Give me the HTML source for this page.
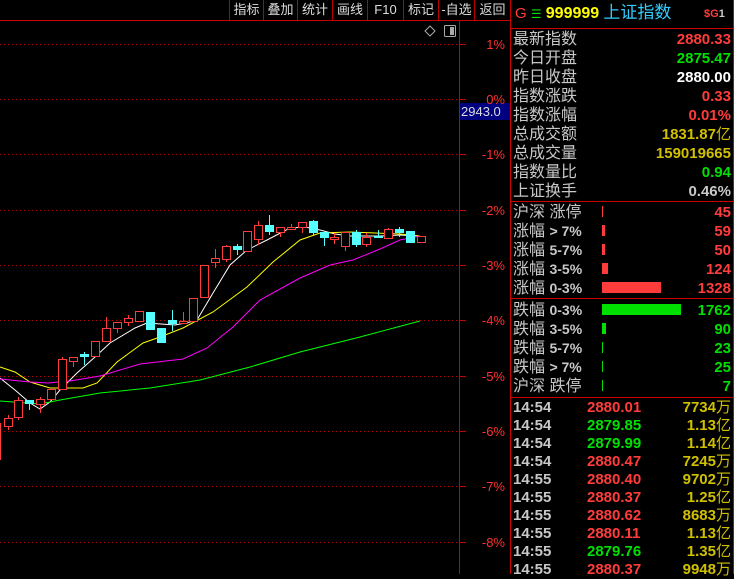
<!DOCTYPE html><html><head><meta charset="utf-8"><style>
*{margin:0;padding:0;box-sizing:border-box}
body{width:734px;height:574px;background:#000;overflow:hidden;position:relative;font-family:"Liberation Sans","WenQuanYi Zen Hei","Noto Sans CJK SC",sans-serif;font-size:14px;}
.a{position:absolute;white-space:nowrap;line-height:19px}
.tb{position:absolute;top:0;height:20px;line-height:20px;color:#ddd;font-size:13px;text-align:center;border-right:1px solid #b00;}
.r{position:absolute;left:513px;width:218px;height:19px;line-height:19px}
.r .l{position:absolute;left:0;color:#c8c8c8;font-size:16px}
.r .l b{font-size:14px}
.r .v{position:absolute;right:0;font-weight:bold;font-size:15px}
.w{color:#c8c8c8}.red{color:#ff3c3c}.grn{color:#00e000}.yel{color:#d0c000}
.pct{position:absolute;left:463px;width:42px;text-align:right;color:#ff3030;font-size:13px;line-height:14px}
.t{font-size:15px}
</style></head><body>
<svg width="734" height="574" style="position:absolute;left:0;top:0">
<g stroke="#b00" stroke-width="1" stroke-dasharray="1,3">
<line x1="0" y1="44.5" x2="459" y2="44.5"/><line x1="0" y1="99.5" x2="459" y2="99.5"/><line x1="0" y1="154.5" x2="459" y2="154.5"/><line x1="0" y1="210.5" x2="459" y2="210.5"/><line x1="0" y1="265.5" x2="459" y2="265.5"/><line x1="0" y1="320.5" x2="459" y2="320.5"/><line x1="0" y1="376.5" x2="459" y2="376.5"/><line x1="0" y1="431.5" x2="459" y2="431.5"/><line x1="0" y1="486.5" x2="459" y2="486.5"/><line x1="0" y1="542.5" x2="459" y2="542.5"/>
</g>
<g stroke="#c00" stroke-width="1">
<line x1="459.5" y1="20" x2="459.5" y2="574"/><line x1="510.5" y1="0" x2="510.5" y2="574"/>
<line x1="0" y1="20.5" x2="510" y2="20.5"/>
<line x1="460" y1="44.5" x2="466" y2="44.5"/><line x1="460" y1="99.5" x2="466" y2="99.5"/><line x1="460" y1="154.5" x2="466" y2="154.5"/><line x1="460" y1="210.5" x2="466" y2="210.5"/><line x1="460" y1="265.5" x2="466" y2="265.5"/><line x1="460" y1="320.5" x2="466" y2="320.5"/><line x1="460" y1="376.5" x2="466" y2="376.5"/><line x1="460" y1="431.5" x2="466" y2="431.5"/><line x1="460" y1="486.5" x2="466" y2="486.5"/><line x1="460" y1="542.5" x2="466" y2="542.5"/>
<line x1="511" y1="28.5" x2="734" y2="28.5"/><line x1="511" y1="201.5" x2="734" y2="201.5"/><line x1="511" y1="298.5" x2="734" y2="298.5"/><line x1="511" y1="397.5" x2="734" y2="397.5"/>
<line x1="733.5" y1="0" x2="733.5" y2="574"/>
</g>
<path d="M430 26 L435 31 L430 36 L425 31 Z" fill="none" stroke="#aaa"/>
<rect x="444.5" y="25.5" width="11" height="11" rx="1" fill="none" stroke="#aaa"/><rect x="450" y="27" width="4" height="8" fill="#aaa"/>
<rect x="460" y="103" width="50" height="17" fill="#000080"/>
<polyline fill="none" stroke="#fff" points="0,378 15,390 30,403 40,409 50,402 60,390 77,373 95,357 110,343 135,328 147,323 175,325 190,322 197,320 213,293 230,265 247,250 267,240 290,228 305,227 320,230 335,234 350,236 380,236 400,235 420,236"/>
<polyline fill="none" stroke="#ff0" points="0,367 15,372 30,382 50,388 83,388 97,383 117,362 143,343 160,337 183,328 213,312 247,287 273,262 300,240 320,233 350,232 400,234 420,236"/>
<polyline fill="none" stroke="#f0f" points="0,379 30,382 48,383 70,381 100,376 140,364 183,359 207,348 233,327 260,300 300,278 330,265 353,260 380,249 400,240 420,236"/>
<polyline fill="none" stroke="#0f0" points="0,401 40,404 60,400 100,393 150,388 200,380 250,367 300,352 360,337 420,321"/>
<g stroke="#ff3c3c" fill="#000">
<line x1="0.5" y1="423" x2="0.5" y2="460"/>
<line x1="8.5" y1="415" x2="8.5" y2="430"/><rect x="4.5" y="418.5" width="8" height="8"/>
<line x1="18.5" y1="397" x2="18.5" y2="420"/><rect x="14.5" y="400.5" width="8" height="17"/>
<line x1="40.5" y1="397" x2="40.5" y2="413"/><rect x="36.5" y="399.5" width="8" height="5"/>
<rect x="47.5" y="389.5" width="8" height="10"/>
<line x1="62.5" y1="357" x2="62.5" y2="389"/><rect x="58.5" y="359.5" width="8" height="30"/>
<line x1="73.5" y1="357" x2="73.5" y2="367"/><rect x="69.5" y="357.5" width="8" height="4"/>
<rect x="91.5" y="341.5" width="8" height="15"/>
<line x1="106.5" y1="317" x2="106.5" y2="341"/><rect x="102.5" y="328.5" width="8" height="13"/>
<line x1="117.5" y1="322" x2="117.5" y2="333"/><rect x="113.5" y="322.5" width="8" height="6"/>
<line x1="128.5" y1="315" x2="128.5" y2="326"/><rect x="124.5" y="318.5" width="8" height="4"/>
<rect x="135.5" y="311.5" width="8" height="10"/>
<line x1="183.5" y1="312" x2="183.5" y2="323"/><rect x="179.5" y="321.5" width="8" height="2"/>
<rect x="189.5" y="298.5" width="8" height="23"/>
<rect x="200.5" y="265.5" width="8" height="32"/>
<line x1="215.5" y1="249" x2="215.5" y2="268"/><rect x="211.5" y="258.5" width="8" height="4"/>
<line x1="226.5" y1="245" x2="226.5" y2="262"/><rect x="222.5" y="246.5" width="8" height="13"/>
<rect x="243.5" y="231.5" width="8" height="20"/>
<line x1="258.5" y1="221" x2="258.5" y2="245"/><rect x="254.5" y="225.5" width="8" height="14"/>
<line x1="280.5" y1="227" x2="280.5" y2="237"/><rect x="276.5" y="227.5" width="8" height="5"/>
<line x1="291.5" y1="224" x2="291.5" y2="230"/><rect x="287.5" y="227.5" width="8" height="2"/>
<line x1="302.5" y1="222" x2="302.5" y2="233"/><rect x="298.5" y="222.5" width="8" height="5"/>
<line x1="334.5" y1="233" x2="334.5" y2="244"/><rect x="330.5" y="237.5" width="8" height="2"/>
<line x1="345.5" y1="232" x2="345.5" y2="251"/><rect x="341.5" y="232.5" width="8" height="14"/>
<line x1="366.5" y1="233" x2="366.5" y2="247"/><rect x="362.5" y="237.5" width="8" height="7"/>
<line x1="388.5" y1="228" x2="388.5" y2="238"/><rect x="384.5" y="229.5" width="8" height="9"/>
<rect x="417.5" y="236.5" width="8" height="6"/>
</g>
<g stroke="#55ffff" fill="#55ffff">
<line x1="29.5" y1="400" x2="29.5" y2="410"/><rect x="25.5" y="400.5" width="8" height="3"/>
<line x1="84.5" y1="352" x2="84.5" y2="365"/><rect x="80.5" y="354.5" width="8" height="2"/>
<rect x="146.5" y="312.5" width="8" height="17"/>
<line x1="161.5" y1="328" x2="161.5" y2="343"/><rect x="157.5" y="328.5" width="8" height="14"/>
<line x1="172.5" y1="310" x2="172.5" y2="331"/><rect x="168.5" y="320.5" width="8" height="3"/>
<line x1="237.5" y1="244" x2="237.5" y2="255"/><rect x="233.5" y="246.5" width="8" height="3"/>
<line x1="269.5" y1="215" x2="269.5" y2="235"/><rect x="265.5" y="225.5" width="8" height="6"/>
<line x1="313.5" y1="220" x2="313.5" y2="235"/><rect x="309.5" y="221.5" width="8" height="11"/>
<line x1="324.5" y1="232" x2="324.5" y2="246"/><rect x="320.5" y="232.5" width="8" height="5"/>
<line x1="356.5" y1="230" x2="356.5" y2="247"/><rect x="352.5" y="232.5" width="8" height="12"/>
<line x1="378.5" y1="230" x2="378.5" y2="237"/><rect x="374.5" y="236.5" width="8" height="1"/>
<line x1="399.5" y1="227" x2="399.5" y2="237"/><rect x="395.5" y="229.5" width="8" height="3"/>
<rect x="406.5" y="231.5" width="8" height="11"/>
</g>
<rect x="602" y="206" width="1" height="11" fill="#ff3c3c"/>
<rect x="602" y="225" width="3" height="11" fill="#ff3c3c"/>
<rect x="602" y="244" width="3" height="11" fill="#ff3c3c"/>
<rect x="602" y="263" width="6" height="11" fill="#ff3c3c"/>
<rect x="602" y="282" width="59" height="11" fill="#ff3c3c"/>
<rect x="602" y="304" width="79" height="11" fill="#00e000"/>
<rect x="602" y="323" width="4" height="11" fill="#00e000"/>
<rect x="602" y="342" width="1" height="11" fill="#00e000"/>
<rect x="602" y="361" width="1" height="11" fill="#00e000"/>
<rect x="602" y="380" width="1" height="11" fill="#00e000"/>
</svg>
<div class="tb" style="left:230px;width:34px">指标</div>
<div class="tb" style="left:264px;width:34px">叠加</div>
<div class="tb" style="left:298px;width:35px">统计</div>
<div class="tb" style="left:333px;width:35px">画线</div>
<div class="tb" style="left:368px;width:36px">F10</div>
<div class="tb" style="left:404px;width:35px">标记</div>
<div class="tb" style="left:439px;width:36px">-自选</div>
<div class="tb" style="left:475px;width:35px;border-right:none">返回</div>
<div class="tb" style="left:229px;width:1px;padding:0"></div>
<div class="pct" style="top:38px">1%</div>
<div class="pct" style="top:93px">0%</div>
<div class="pct" style="top:148px">-1%</div>
<div class="pct" style="top:204px">-2%</div>
<div class="pct" style="top:259px">-3%</div>
<div class="pct" style="top:314px">-4%</div>
<div class="pct" style="top:370px">-5%</div>
<div class="pct" style="top:425px">-6%</div>
<div class="pct" style="top:480px">-7%</div>
<div class="pct" style="top:536px">-8%</div>
<div class="a" style="left:461px;top:102px;color:#ddd;font-size:13px">2943.0</div>
<div class="a" style="left:515px;top:3px;font-size:15px"><span class="red">G</span> <span class="grn" style="font-size:12px">☰</span> <span style="color:#ff0;font-weight:bold;font-size:16px">999999</span> <span style="color:#3cf;font-size:17px">上证指数</span></div>
<div class="a red" style="left:704px;top:5px;font-size:11px;font-weight:bold">$G<span class="w">1</span></div>
<div class="r" style="top:30px"><span class="l">最新指数</span><span class="v red">2880.33</span></div>
<div class="r" style="top:49px"><span class="l">今日开盘</span><span class="v grn">2875.47</span></div>
<div class="r" style="top:68px"><span class="l">昨日收盘</span><span class="v" style="color:#fff">2880.00</span></div>
<div class="r" style="top:87px"><span class="l">指数涨跌</span><span class="v red">0.33</span></div>
<div class="r" style="top:106px"><span class="l">指数涨幅</span><span class="v red">0.01%</span></div>
<div class="r" style="top:125px"><span class="l">总成交额</span><span class="v yel">1831.87<span style="font-weight:normal">亿</span></span></div>
<div class="r" style="top:144px"><span class="l">总成交量</span><span class="v yel">159019665</span></div>
<div class="r" style="top:163px"><span class="l">指数量比</span><span class="v grn">0.94</span></div>
<div class="r" style="top:182px"><span class="l">上证换手</span><span class="v w">0.46%</span></div>
<div class="r" style="top:203px"><span class="l">沪深 涨停</span><span class="v red">45</span></div>
<div class="r" style="top:222px"><span class="l">涨幅 <b>&gt; 7%</b></span><span class="v red">59</span></div>
<div class="r" style="top:241px"><span class="l">涨幅 <b>5-7%</b></span><span class="v red">50</span></div>
<div class="r" style="top:260px"><span class="l">涨幅 <b>3-5%</b></span><span class="v red">124</span></div>
<div class="r" style="top:279px"><span class="l">涨幅 <b>0-3%</b></span><span class="v red">1328</span></div>
<div class="r" style="top:301px"><span class="l">跌幅 <b>0-3%</b></span><span class="v grn">1762</span></div>
<div class="r" style="top:320px"><span class="l">跌幅 <b>3-5%</b></span><span class="v grn">90</span></div>
<div class="r" style="top:339px"><span class="l">跌幅 <b>5-7%</b></span><span class="v grn">23</span></div>
<div class="r" style="top:358px"><span class="l">跌幅 <b>&gt; 7%</b></span><span class="v grn">25</span></div>
<div class="r" style="top:377px"><span class="l">沪深 跌停</span><span class="v grn">7</span></div>
<div class="t" style="position:absolute;left:513px;top:399px;width:218px;font-weight:bold;line-height:18px">
<div style="position:relative;height:18px"><span class="w" style="position:absolute;left:0">14:54</span><span class="red" style="position:absolute;left:74px">2880.01</span><span class="yel" style="position:absolute;right:0">7734<span style="font-weight:normal">万</span></span></div>
<div style="position:relative;height:18px"><span class="w" style="position:absolute;left:0">14:54</span><span class="grn" style="position:absolute;left:74px">2879.85</span><span class="yel" style="position:absolute;right:0">1.13<span style="font-weight:normal">亿</span></span></div>
<div style="position:relative;height:18px"><span class="w" style="position:absolute;left:0">14:54</span><span class="grn" style="position:absolute;left:74px">2879.99</span><span class="yel" style="position:absolute;right:0">1.14<span style="font-weight:normal">亿</span></span></div>
<div style="position:relative;height:18px"><span class="w" style="position:absolute;left:0">14:54</span><span class="red" style="position:absolute;left:74px">2880.47</span><span class="yel" style="position:absolute;right:0">7245<span style="font-weight:normal">万</span></span></div>
<div style="position:relative;height:18px"><span class="w" style="position:absolute;left:0">14:55</span><span class="red" style="position:absolute;left:74px">2880.40</span><span class="yel" style="position:absolute;right:0">9702<span style="font-weight:normal">万</span></span></div>
<div style="position:relative;height:18px"><span class="w" style="position:absolute;left:0">14:55</span><span class="red" style="position:absolute;left:74px">2880.37</span><span class="yel" style="position:absolute;right:0">1.25<span style="font-weight:normal">亿</span></span></div>
<div style="position:relative;height:18px"><span class="w" style="position:absolute;left:0">14:55</span><span class="red" style="position:absolute;left:74px">2880.62</span><span class="yel" style="position:absolute;right:0">8683<span style="font-weight:normal">万</span></span></div>
<div style="position:relative;height:18px"><span class="w" style="position:absolute;left:0">14:55</span><span class="red" style="position:absolute;left:74px">2880.11</span><span class="yel" style="position:absolute;right:0">1.13<span style="font-weight:normal">亿</span></span></div>
<div style="position:relative;height:18px"><span class="w" style="position:absolute;left:0">14:55</span><span class="grn" style="position:absolute;left:74px">2879.76</span><span class="yel" style="position:absolute;right:0">1.35<span style="font-weight:normal">亿</span></span></div>
<div style="position:relative;height:18px"><span class="w" style="position:absolute;left:0">14:55</span><span class="red" style="position:absolute;left:74px">2880.37</span><span class="yel" style="position:absolute;right:0">9948<span style="font-weight:normal">万</span></span></div>
</div>
</body></html>
